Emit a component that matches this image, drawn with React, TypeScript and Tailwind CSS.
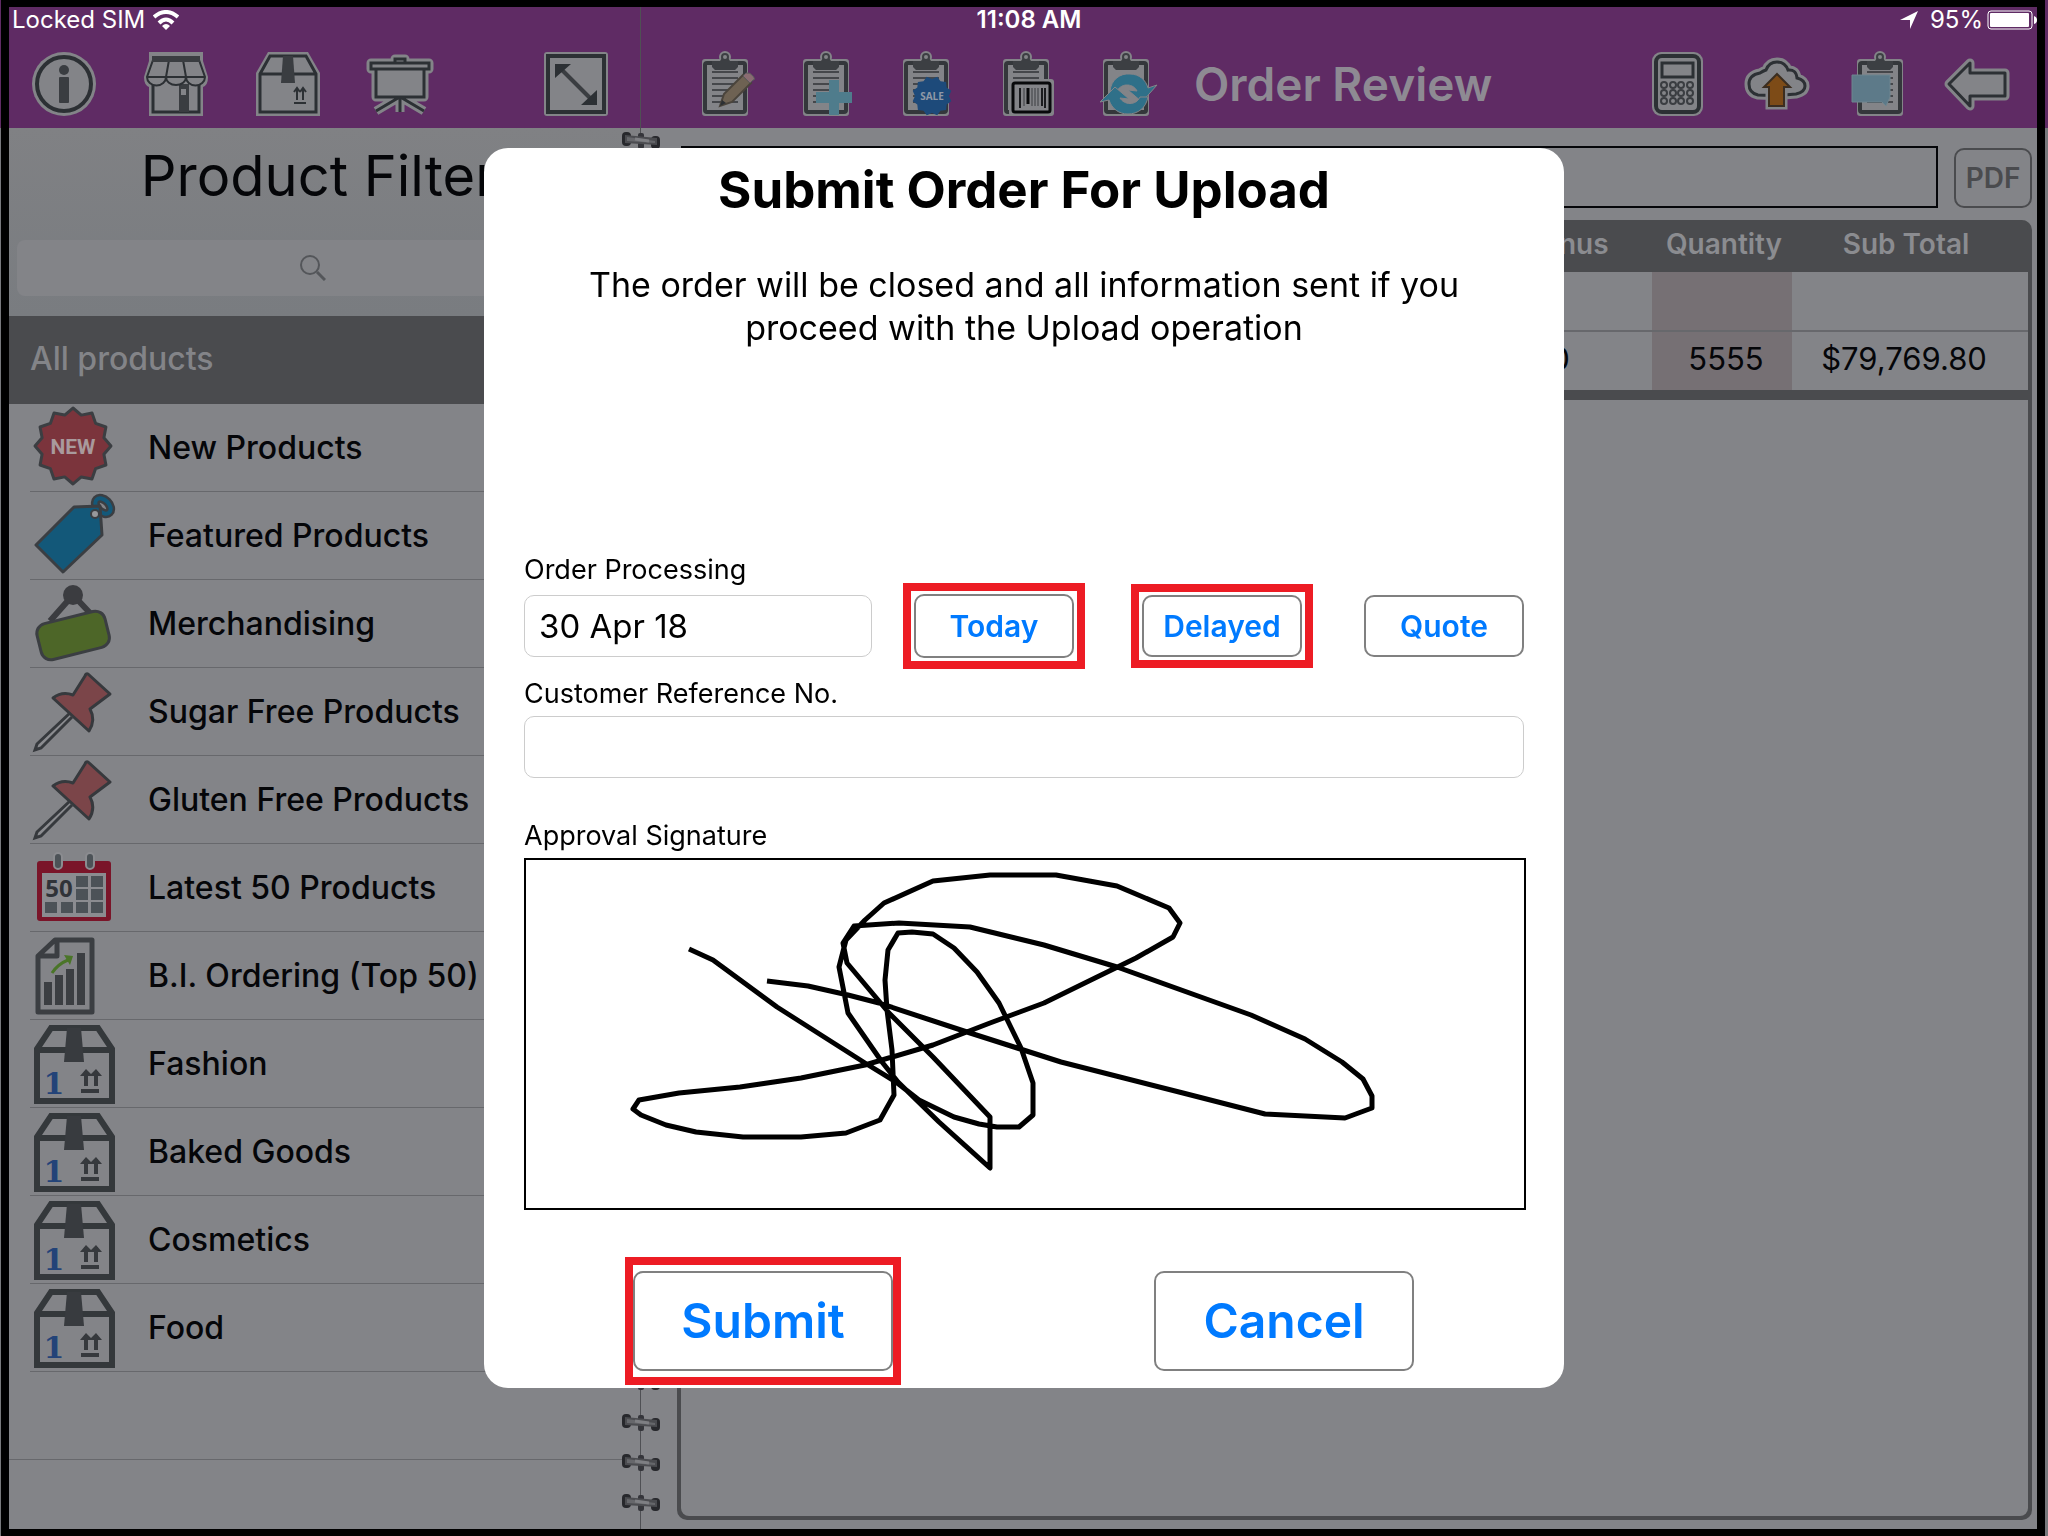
import type { ReactNode } from "react";

const LIGHT = "#838488";
const DARK = "#2c3034";

function Icon({ children, className = "size-16" }: { children: ReactNode; className?: string }) {
	return (
		<svg viewBox="0 0 64 64" className={`${className} block overflow-visible`} fill="none" aria-hidden="true">
			{children}
		</svg>
	);
}

function InfoIcon() {
	return (
		<Icon>
			<circle cx="32" cy="32" r="32" fill={LIGHT} />
			<circle cx="32" cy="32" r="27" stroke={DARK} strokeWidth="4" />
			<circle cx="32" cy="18" r="5" fill="#3a3d41" />
			<rect x="27" y="25" width="10" height="26" rx="1" fill="#3a3d41" />
		</Icon>
	);
}

function StoreIcon() {
	return (
		<Icon>
			<path d="M5 0H59V9L64 25Q64 33 59 35V64H5V35Q0 33 0 25L5 9Z" fill={LIGHT} />
			<path d="M9 32V60H55V32" stroke={DARK} strokeWidth="3" />
			<rect x="35" y="32" width="10" height="28" fill="#3a3d41" />
			<rect x="37" y="37" width="5" height="6" fill={LIGHT} />
			<path d="M9 8L3 25a9 8 0 0 0 19 0a10 8 0 0 0 20 0a9 8 0 0 0 19 0L55 8Z" fill={LIGHT} stroke={DARK} strokeWidth="2" />
			<path d="M25 8L22 25M39 8L42 25M3 25H61" stroke={DARK} strokeWidth="2" />
			<rect x="8" y="4" width="48" height="6" fill="#3a3d41" />
		</Icon>
	);
}

function BoxIcon() {
	return (
		<Icon>
			<path d="M12 0H52L64 21V64H0V21Z" fill={LIGHT} />
			<path d="M14 4H50L60 22V60H4V22ZM4 22H60" stroke={DARK} strokeWidth="3" />
			<path d="M27 4H37L39 31H25Z" fill="#3a3d41" />
			<path d="M41 48V37M47 48V37M38 40L41 36L44 40M44 40L47 36L50 40M38 51H50" stroke={DARK} strokeWidth="2" />
		</Icon>
	);
}

function BoardIcon() {
	const shape = "M27 11V7H37V11M3 11H61V17H3ZM8 17V45H56V17M30 46L8 59M32 46V60M34 46L56 59";
	return (
		<Icon>
			<path d={shape} stroke={LIGHT} strokeWidth="9" strokeLinejoin="round" />
			<rect x="8" y="17" width="48" height="28" fill={LIGHT} />
			<path d={shape} stroke={DARK} strokeWidth="3" />
		</Icon>
	);
}

function ExpandIcon() {
	return (
		<Icon>
			<rect width="64" height="64" rx="3" fill={LIGHT} />
			<rect x="4" y="4" width="56" height="56" stroke={DARK} strokeWidth="4" />
			<path d="M16 16L50 50" stroke="#3a3d41" strokeWidth="4" />
			<path d="M11 12H27L11 26ZM53 53H37L53 38Z" fill={DARK} />
		</Icon>
	);
}

function Clipboard({ shift = 0, lines = true }: { shift?: number; lines?: boolean }) {
	return (
		<g transform={`translate(${shift} 0)`}>
			<circle cx="30" cy="5" r="6" fill={LIGHT} />
			<rect x="7" y="7" width="46" height="57" rx="3" fill={LIGHT} />
			<rect x="10" y="11" width="40" height="49" rx="2" stroke="#34373b" strokeWidth="4" />
			{lines && <path d="M17 20H43M17 26H43M17 32H43M17 38H43M17 44H43M17 50H43" stroke="#45474b" strokeWidth="2" />}
			<path d="M17 9H25L27 6H33L35 9H43V15L40 18H20L17 15Z" fill="#3c3f43" />
			<circle cx="30" cy="5" r="3" fill={LIGHT} stroke="#3c3f43" strokeWidth="2" />
		</g>
	);
}

function EditIcon() {
	return (
		<Icon>
			<Clipboard shift={-1} />
			<path d="M24 54L28 42L47 23L55 31L36 50Z" fill="#6e6253" stroke="#4a443c" strokeWidth="2" />
			<path d="M47 24L50 21Q54 20 57 24T57 28L54 31Z" fill="#8a6c72" stroke="#5a5a5e" strokeWidth="1" />
			<path d="M24 54L26 48L30 51Z" fill={DARK} />
		</Icon>
	);
}

function AddIcon() {
	return (
		<Icon>
			<Clipboard />
			<path d="M33 28H43V40H56V51H43V63H33V51H20V40H33Z" fill="#4f7c8c" />
		</Icon>
	);
}

function burst(cx: number, cy: number, outer: number, inner: number, count: number) {
	return Array.from({ length: count * 2 }, (_, i) => {
		const r = i % 2 ? inner : outer;
		const a = ((i + 1) * Math.PI) / count;
		return `${Math.round((cx + r * Math.sin(a)) * 10) / 10},${Math.round((cy - r * Math.cos(a)) * 10) / 10}`;
	}).join(" ");
}

function SaleIcon() {
	return (
		<Icon>
			<Clipboard />
			<polygon points={burst(36, 44, 20, 17, 12)} fill="#1d4a7a" />
			<text x="36" y="48" textAnchor="middle" fontSize="10" fontWeight="700" fill="#8f99a6" className="font-['Open_Sans',sans-serif]">
				SALE
			</text>
		</Icon>
	);
}

function BarcodeIcon() {
	return (
		<Icon>
			<Clipboard />
			<rect x="13" y="27" width="45" height="37" rx="3" fill={LIGHT} />
			<rect x="17" y="31" width="37" height="29" rx="2" stroke="#08090b" strokeWidth="3" />
			<path d="M24 36V56M46 36V54M49 36V56" stroke="#1a1b1e" strokeWidth="2" />
			<path d="M28 36V54M36 36V54M39 36V54M42 36V54" stroke="#3a3c40" strokeWidth="1" />
			<path d="M32 36V52" stroke="#08090b" strokeWidth="3" />
		</Icon>
	);
}

function RefreshIcon() {
	return (
		<Icon>
			<Clipboard lines={false} />
			<path d="M14 39C15 28 24 21 34 22C43 22 50 28 52 36L61 33L46 50L32 38L41 39C38 32 26 30 21 39Z" fill="#2f7089" stroke={LIGHT} strokeWidth="1" />
			<path d="M52 45C50 56 42 62 32 62C23 62 16 57 13 48L4 50L19 35L33 47L24 46C28 53 40 54 44 45Z" fill="#2f7089" stroke={LIGHT} strokeWidth="1" />
		</Icon>
	);
}

function CalculatorIcon() {
	return (
		<Icon>
			<rect x="7" y="0" width="51" height="64" rx="9" fill={LIGHT} />
			<rect x="11" y="4" width="43" height="56" rx="6" stroke={DARK} strokeWidth="4" />
			<rect x="17" y="11" width="31" height="14" stroke={DARK} strokeWidth="3" />
			{[33, 41, 49].map((y) =>
				[19, 28, 36, 45].map((x) => <circle key={`${x}-${y}`} cx={x} cy={y} r="3" stroke="#3a3d41" strokeWidth="2" />)
			)}
		</Icon>
	);
}

function CloudUploadIcon() {
	const cloud = "M13 43Q4 41 4 32T15 21Q18 19 21 18Q24 10 32 10T43 18Q51 17 52 26Q60 28 60 34T51 42Q32 44 13 43Z";
	return (
		<Icon>
			<path d={cloud} stroke={LIGHT} strokeWidth="9" />
			<path d={cloud} fill={LIGHT} stroke={DARK} strokeWidth="3" />
			<path d="M32 22L45 35H39V54H24V35H19Z" stroke={LIGHT} strokeWidth="7" />
			<path d="M32 22L45 35H39V54H24V35H19Z" fill="#7d4b17" stroke="#3b2d20" strokeWidth="2" />
		</Icon>
	);
}

function NotesIcon() {
	return (
		<Icon>
			<Clipboard shift={5} />
			<path d="M7 23H45V45L41 54L37 50H7Z" fill="#5d7a89" stroke="#6f858f" strokeWidth="1" />
		</Icon>
	);
}

function BackIcon() {
	const arrow = "M4 32L25 11V21H60V44H25V54Z";
	return (
		<Icon>
			<path d={arrow} stroke={LIGHT} strokeWidth="9" strokeLinejoin="round" />
			<path d={arrow} fill={LIGHT} stroke={DARK} strokeWidth="3" strokeLinejoin="round" />
		</Icon>
	);
}

function RowIcon({ children }: { children: ReactNode }) {
	return (
		<svg viewBox="0 0 80 80" className="block size-20 shrink-0 overflow-visible" fill="none" aria-hidden="true">
			{children}
		</svg>
	);
}

function NewBadge() {
	return (
		<RowIcon>
			<polygon points={burst(39, 38, 38, 32, 12)} transform="rotate(-15 39 38)" fill="#7b343c" stroke="#3b3e42" strokeWidth="3" strokeLinejoin="round" />
			<text x="39" y="46" textAnchor="middle" fontSize="21" fontWeight="700" fill="#a99a9d" className="font-['Roboto',sans-serif]">
				NEW
			</text>
		</RowIcon>
	);
}

function TagIcon() {
	return (
		<RowIcon>
			<ellipse cx="69" cy="10" rx="9" ry="6" transform="rotate(45 69 10)" stroke="#3b3e42" strokeWidth="9" />
			<ellipse cx="69" cy="10" rx="9" ry="6" transform="rotate(45 69 10)" stroke="#135879" strokeWidth="4" />
			<path d="M40 11L66 10L68 39L29 76L2 49Z" fill="#135879" stroke="#3b3e42" strokeWidth="3" strokeLinejoin="round" />
			<circle cx="61" cy="18" r="4" fill="#97989b" stroke="#3b3e42" strokeWidth="2" />
		</RowIcon>
	);
}

function SignIcon() {
	return (
		<RowIcon>
			<path d="M16 37L39 11L56 29" stroke="#3b3c40" strokeWidth="6" />
			<circle cx="39" cy="11" r="10" fill="#3b3c40" />
			<rect x="4" y="33" width="70" height="37" rx="10" transform="rotate(-14 39 51)" fill="#4d6628" stroke="#3b3e42" strokeWidth="3" />
		</RowIcon>
	);
}

function PinIcon() {
	return (
		<RowIcon>
			<path d="M36 41L3 72L1 78L7 76L38 45" fill="#8b8c90" stroke="#36393d" strokeWidth="3" />
			<path d="M54 2L76 22L56 37Q62 48 55 59L19 26Q28 19 39 23L51 4Q52 1 54 2Z" fill="#7b4549" stroke="#36393d" strokeWidth="3" strokeLinejoin="round" />
		</RowIcon>
	);
}

function CalendarIcon() {
	const cells = [
		[42, 28], [57, 28], [42, 41], [57, 41], [11, 54], [27, 54], [42, 54], [57, 54],
	];
	return (
		<RowIcon>
			<rect x="3" y="13" width="74" height="60" rx="3" fill="#7a1529" />
			<rect x="8" y="25" width="64" height="44" fill="#8b8c90" />
			{[24, 56].map((x) => (
				<rect key={x} x={x - 4} y="5" width="8" height="16" rx="4" fill="#4c5257" stroke="#8b8c90" strokeWidth="2" />
			))}
			{cells.map(([x, y]) => (
				<rect key={`${x}-${y}`} x={x} y={y} width="12" height="11" fill="#4c5257" />
			))}
			<text x="25" y="49" textAnchor="middle" fontSize="24" fontWeight="700" fill="#303338" className="font-['Open_Sans',sans-serif]">
				50
			</text>
		</RowIcon>
	);
}

function ReportIcon() {
	return (
		<RowIcon>
			<path d="M21 4H58V76H4V20ZM4 20H23V4" stroke="#3b3e42" strokeWidth="5" strokeLinejoin="round" />
			<path d="M14 46V69M25 39V69M36 33V69M47 17V69" stroke="#3b3e42" strokeWidth="8" />
			<path d="M18 37Q24 28 34 24" stroke="#4a7528" strokeWidth="3" />
			<path d="M30 19L39 20L36 29Z" fill="#4a7528" />
		</RowIcon>
	);
}

function PackageIcon() {
	return (
		<RowIcon>
			<path d="M17 4H64L78 25V77H3V25ZM3 26H78" stroke="#34383b" strokeWidth="6" />
			<path d="M33 4H47L50 38H30Z" fill="#383b3f" />
			<text x="20" y="70" textAnchor="middle" fontSize="30" fontWeight="700" fill="#234378" className="font-['DejaVu_Serif','DejaVu_Sans',serif]">
				1
			</text>
			<path d="M52 62V47M62 62V47M47 67H65" stroke="#36393d" strokeWidth="4" />
			<path d="M46 52L52 45L57 50L62 45L68 52Z" fill="#36393d" />
		</RowIcon>
	);
}

const leftTools = [
	{ label: "Information", icon: <InfoIcon /> },
	{ label: "Store", icon: <StoreIcon /> },
	{ label: "Products", icon: <BoxIcon /> },
	{ label: "Presentation", icon: <BoardIcon /> },
];

const orderTools = [
	{ label: "Edit order", icon: <EditIcon /> },
	{ label: "Add order", icon: <AddIcon /> },
	{ label: "Sale", icon: <SaleIcon /> },
	{ label: "Scan barcode", icon: <BarcodeIcon /> },
	{ label: "Refresh", icon: <RefreshIcon /> },
];

const rightTools = [
	{ label: "Calculator", icon: <CalculatorIcon /> },
	{ label: "Upload", icon: <CloudUploadIcon /> },
	{ label: "Notes", icon: <NotesIcon /> },
	{ label: "Back", icon: <BackIcon /> },
];

const filters = [
	{ name: "New Products", icon: <NewBadge /> },
	{ name: "Featured Products", icon: <TagIcon /> },
	{ name: "Merchandising", icon: <SignIcon /> },
	{ name: "Sugar Free Products", icon: <PinIcon /> },
	{ name: "Gluten Free Products", icon: <PinIcon /> },
	{ name: "Latest 50 Products", icon: <CalendarIcon /> },
	{ name: "B.I. Ordering (Top 50)", icon: <ReportIcon /> },
	{ name: "Fashion", icon: <PackageIcon /> },
	{ name: "Baked Goods", icon: <PackageIcon /> },
	{ name: "Cosmetics", icon: <PackageIcon /> },
	{ name: "Food", icon: <PackageIcon /> },
];

function ToolButtons({ tools, className }: { tools: { label: string; icon: ReactNode }[]; className: string }) {
	return (
		<div className={`flex ${className}`}>
			{tools.map((tool) => (
				<button key={tool.label} type="button" aria-label={tool.label}>
					{tool.icon}
				</button>
			))}
		</div>
	);
}

function StatusBar() {
	return (
		<div className="absolute inset-x-0 top-0 grid h-[26px] grid-cols-3 items-center text-2xl leading-[26px] text-white">
			<div className="flex items-center gap-2 pl-[3px]">
				<span>Locked SIM</span>
				<svg viewBox="0 0 26 20" className="h-5 w-[26px]" fill="none" stroke="white" strokeWidth="4" aria-hidden="true">
					<path d="M1 7Q13 -3 25 7M6 13Q13 6 20 13" />
					<path d="M9 16Q13 12 17 16L13 20Z" fill="white" stroke="none" />
				</svg>
			</div>
			<div className="pl-3 text-center font-semibold">11:08 AM</div>
			<div className="flex items-center justify-end">
				<svg viewBox="0 0 18 18" className="mr-3 size-[18px]" fill="white" aria-hidden="true">
					<path d="M18 0L10 18V9H0Z" />
				</svg>
				<span>95%</span>
				<svg viewBox="0 0 50 20" className="ml-1 h-5 w-[50px]" fill="none" aria-hidden="true">
					<rect x="1" y="1" width="44" height="18" rx="3" stroke="white" strokeWidth="1" />
					<rect x="3" y="3" width="39" height="14" rx="1" fill="white" />
					<path d="M47 6Q50 7 50 10T47 14Z" fill="white" />
				</svg>
			</div>
		</div>
	);
}

function Rings() {
	return (
		<div className="absolute -left-[19px] top-[125px] bottom-[18px] flex w-[38px] flex-col justify-between" aria-hidden="true">
			{Array.from({ length: 35 }, (_, i) => (
				<svg key={i} viewBox="0 0 38 17" className="block h-[17px] w-[38px]">
					<rect x="0" y="0" width="9" height="14" rx="4" fill="#27282c" />
					<rect x="29" y="4" width="9" height="13" rx="4" fill="#27282c" />
					<rect x="16" y="1" width="6" height="16" rx="2" fill="#34353a" />
					<path d="M3 3L35 6V13L3 11Z" fill="#4b4c50" />
					<path d="M5 5L33 9V11L5 9Z" fill="#66676b" />
					<path d="M13 7L27 9" stroke="#7e7f83" strokeWidth="3" />
				</svg>
			))}
		</div>
	);
}

function FilterPanel() {
	return (
		<aside className="flex w-[631px] shrink-0 flex-col">
			<nav className="flex h-[121px] items-end justify-between bg-[#5f2b64] pb-3 pl-[23px] pr-8">
				<ToolButtons tools={leftTools} className="gap-12" />
				<button type="button" aria-label="Expand">
					<ExpandIcon />
				</button>
			</nav>
			<div className="flex h-[188px] flex-col bg-linear-to-b from-[#808184] to-[#797c80]">
				<h1 className="pr-3 pt-2 text-center text-[56px] leading-[80px] text-[#050609]">Product Filter</h1>
				<label className="ml-2 mr-8 mt-6 flex h-14 items-center justify-center rounded-lg bg-[#838488]">
					<span className="sr-only">Search products</span>
					<svg viewBox="0 0 26 26" className="size-[26px]" fill="none" stroke="#54565a" strokeWidth="2" aria-hidden="true">
						<circle cx="10" cy="10" r="9" />
						<path d="M17 17L25 25" strokeWidth="3" />
					</svg>
					<input type="search" className="w-0 outline-none" />
				</label>
			</div>
			<h2 className="flex h-[88px] items-center bg-[#4a4b4e] pb-[2px] pl-[21px] text-[32px] font-medium text-[#838488]">All products</h2>
			<ul className="flex-1">
				{filters.map((filter) => (
					<li key={filter.name} className="ml-[21px] h-[88px] border-b border-[#67686c]">
						<button type="button" className="flex h-full w-full items-center gap-[34px] pl-1 text-left text-[32px] font-medium text-[#050609]">
							{filter.icon}
							{filter.name}
						</button>
					</li>
				))}
				<li className="h-[88px] border-b border-[#67686c]" />
			</ul>
		</aside>
	);
}

function OrderPanel() {
	return (
		<main className="relative flex min-w-0 flex-1 flex-col border-l border-[#4f5054]">
			<header className="flex h-[121px] items-end bg-[#5f2b64] pb-3 pl-[55px] pr-7">
				<ToolButtons tools={orderTools} className="gap-9" />
				<h1 className="ml-[34px] flex-1 whitespace-nowrap text-[46px] font-semibold leading-[64px] text-[#8e8a93]">Order Review</h1>
				<ToolButtons tools={rightTools} className="gap-9" />
			</header>
			<div className="flex flex-1 flex-col gap-3 pt-[18px] pb-[9px] pl-9 pr-[5px]">
				<div className="flex items-end gap-4 pl-1">
					<input type="text" aria-label="Order note" className="h-[62px] min-w-0 flex-1 border-2 border-[#050609] bg-transparent" />
					<button type="button" className="h-[60px] w-[78px] rounded-[10px] border-2 border-[#4a4b4e] text-[28px] font-semibold text-[#4a4b4e]">
						PDF
					</button>
				</div>
				<div className="flex-1 rounded-[10px] border-4 border-t-0 border-[#4a4b4e] bg-[#4a4b4e]">
					<div className="flex h-full flex-col">
						<table className="w-full table-fixed border-collapse text-center">
							<thead>
								<tr className="h-[52px] text-[28px] leading-8 text-[#8b8c90]">
									<th />
									<th className="w-[172px] pb-1 font-semibold">Bonus</th>
									<th className="w-[140px] pb-1 pl-1 font-semibold">Quantity</th>
									<th className="w-[236px] pb-1 pr-2 font-semibold">Sub Total</th>
								</tr>
							</thead>
							<tbody className="bg-[#838488] text-[31px] leading-10 text-[#050609]">
								<tr className="h-[59px] border-b-2 border-[#67686c]">
									<td />
									<td />
									<td className="bg-[#767074]" />
									<td />
								</tr>
								<tr className="h-[59px]">
									<td />
									<td className="pb-1 pr-3">0</td>
									<td className="bg-[#767074] pb-1 pl-2">5555</td>
									<td className="pb-1 pr-3">$79,769.80</td>
								</tr>
							</tbody>
						</table>
						<div className="mt-[10px] flex-1 rounded-b-[8px] bg-[#838488]" />
					</div>
				</div>
			</div>
			<Rings />
		</main>
	);
}

const signature =
	"163,89 187,100 251,147 339,203 370,222 393,240 428,257 453,264 471,267 493,267 507,255 507,223 495,188 473,143 451,112 428,88 407,74 386,72 372,73 362,90 359,120 361,150 366,190 368,235 354,260 320,273 275,277 217,277 170,272 140,265 115,255 107,249 113,240 153,233 214,227 275,218 339,205 407,185 464,163 518,143 569,118 610,98 647,77 654,63 643,48 591,26 530,15 464,15 407,21 358,43 339,60 320,80 313,107 322,153 356,202 372,222 413,262 464,308 464,257 407,197 363,153 321,103 317,83 328,66 373,63 444,67 518,85 591,107 725,155 779,179 816,202 837,219 846,236 846,248 819,258 739,254 657,233 535,202 441,172 353,143 322,135 282,126 241,121";

const smallButton = "w-40 rounded-[10px] border-2 border-[#808080] text-[30px] font-semibold text-[#007aff]";
const largeButton = "h-[100px] w-[260px] rounded-[10px] border-2 border-[#808080] text-[48px] font-semibold text-[#007aff]";

function SubmitDialog() {
	return (
		<div className="fixed inset-0 flex items-center justify-center">
			<form role="dialog" aria-labelledby="submit-title" className="w-[1080px] rounded-[24px] bg-white px-10 pb-[3px] text-black" onSubmit={(e) => e.preventDefault()}>
				<h2 id="submit-title" className="pt-2 text-center text-[51px] font-bold leading-[68px]">
					Submit Order For Upload
				</h2>
				<p className="mx-auto mt-[39px] h-[293px] max-w-[920px] text-center text-[34px] leading-[43px]">
					The order will be closed and all information sent if you proceed with the Upload operation
				</p>

				<label htmlFor="processing" className="block text-[27px] leading-[27px]">Order Processing</label>
				<div className="flex items-center">
					<input
						id="processing"
						type="text"
						defaultValue="30 Apr 18"
						className="h-[62px] w-[348px] rounded-[10px] border border-[#cccccc] pl-[14px] text-[33px]"
					/>
					<div className="ml-[31px] border-8 border-[#ed1c24] p-[3px]">
						<button type="button" className={`block h-16 ${smallButton}`}>Today</button>
					</div>
					<div className="ml-[46px] border-8 border-[#ed1c24] p-[3px]">
						<button type="button" className={`block h-[62px] ${smallButton}`}>Delayed</button>
					</div>
					<button type="button" className={`ml-auto h-[62px] ${smallButton}`}>Quote</button>
				</div>

				<label htmlFor="reference" className="mt-[9px] block text-[27px] leading-8">Customer Reference No.</label>
				<input id="reference" type="text" className="mt-[6px] block h-[62px] w-full rounded-[10px] border border-[#cccccc] px-[14px] text-[33px]" />

				<p className="mt-[42px] text-[27px] leading-8">Approval Signature</p>
				<div className="-mr-[2px] mt-[6px] border-2 border-black">
					<svg viewBox="0 0 998 348" className="block w-full" role="img" aria-label="Signature">
						<polyline points={signature} fill="none" stroke="black" strokeWidth="5" strokeLinejoin="round" />
					</svg>
				</div>

				<div className="mt-[47px] flex items-center justify-between pl-[101px] pr-[110px]">
					<div className="flex h-32 items-center border-8 border-[#ed1c24]">
						<button type="submit" className={largeButton}>Submit</button>
					</div>
					<button type="button" className={largeButton}>Cancel</button>
				</div>
			</form>
		</div>
	);
}

export default function App() {
	return (
		<div className="flex min-h-screen bg-linear-to-b from-[#5f2b64] from-[128px] to-[#77787c] to-[128px] pl-px pr-[3px] font-['Inter','Liberation_Sans',sans-serif]">
			<div className="relative flex min-w-0 flex-1 border-x-8 border-y-[7px] border-black bg-[#838488]">
				<FilterPanel />
				<OrderPanel />
				<StatusBar />
			</div>
			<SubmitDialog />
		</div>
	);
}
